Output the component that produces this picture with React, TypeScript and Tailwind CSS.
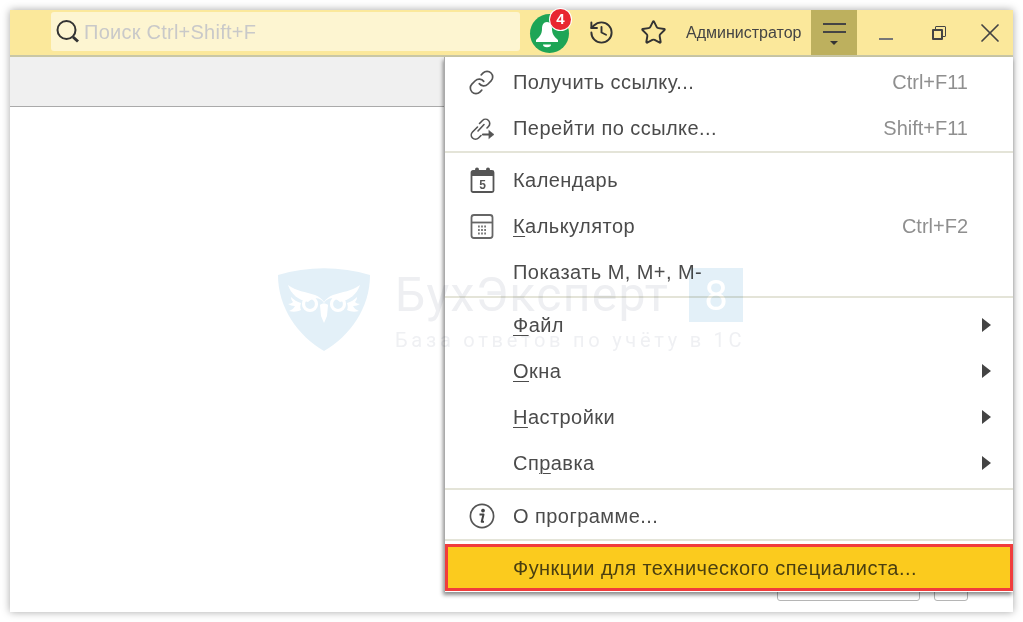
import React from 'react';
import { Link, History, Star, X } from 'lucide-react';

const sans = "font-['Liberation_Sans',Arial,sans-serif]";

const LinkGoIcon = () => (
  <svg width="28" height="28" viewBox="0 0 28 28" fill="none" stroke="#555" strokeWidth="1.6" strokeLinecap="round">
    <path d="M9.500 13l-5 5a4.200 4.200 0 0 0 6 6l2.500-2.500" />
    <path d="M10 17l6-6.500M11.500 9.500l3-3a4.200 4.200 0 0 1 6 6l-1.500 1.500" />
    <path d="M15 20.500h8" strokeWidth="2.200" />
    <path d="M21 16.500l5 4-5 4z" fill="#555" strokeWidth="0.5" />
  </svg>
);

const CalendarIcon = () => (
  <svg width="28" height="28" viewBox="0 0 28 28" fill="none">
    <rect x="3.500" y="5" width="22" height="21" rx="1.500" stroke="#555" strokeWidth="1.800" />
    <rect x="3.500" y="5" width="22" height="5" fill="#555" />
    <circle cx="9" cy="3.500" r="2" fill="#555" />
    <circle cx="20" cy="3.500" r="2" fill="#555" />
    <text x="14.500" y="22.500" textAnchor="middle" fontSize="12" fontWeight="700" fontFamily="Liberation Sans" fill="#555">5</text>
  </svg>
);

const CalculatorIcon = () => (
  <svg width="28" height="28" viewBox="0 0 28 28" fill="none">
    <rect x="3.500" y="3" width="21" height="23" rx="2.500" stroke="#666" strokeWidth="1.800" />
    <path d="M3.500 10.500h21" stroke="#666" strokeWidth="1.800" />
    <path d="M10 14.500h9M10 18h9M10 21.500h9" stroke="#777" strokeWidth="1.800" strokeDasharray="1.800 1.300" />
  </svg>
);

const InfoIcon = () => (
  <svg width="28" height="28" viewBox="0 0 28 28" fill="none">
    <circle cx="14" cy="14" r="11.600" stroke="#555" strokeWidth="1.700" />
    <circle cx="15" cy="8.600" r="1.900" fill="#444" />
    <path d="M11.500 12.500h4l-1.800 7.200h2.300" stroke="#444" strokeWidth="2" strokeLinejoin="round" />
  </svg>
);

const BellBadge = () => (
  <div className="relative w-[39px] h-[39px] rounded-full bg-[#1ea556] flex items-center justify-center">
    <svg width="24" height="28" viewBox="0 0 24 28" fill="white" className="mt-[3px] -ml-[6px]">
      <path d="M12 1c-3.500 0-5 3-5 7 0 5-2.500 8-6 11v2h22v-2c-3.500-3-6-6-6-11 0-4-1.500-7-5-7z" />
      <path d="M8 23.500h8a4 2.800 0 0 1-8 0z" />
    </svg>
    <span className={`absolute -top-[5px] left-[20px] w-[21px] h-[21px] rounded-full bg-[#e8272f] ring-1 ring-white text-white text-[15px] font-bold flex items-center justify-center ${sans}`}>4</span>
  </div>
);

const Owl = () => (
  <svg width="92" height="84" viewBox="0 0 92 84">
    <path d="M0 7C30 -2 62 -2 92 7 C92 40 72 68 46 83 C20 68 0 40 0 7z" fill="#e3f0f8" />
    <g fill="#ffffff">
      <path d="M10 17c8 6 18 7 27 10 4 1.500 7 4 9 7 2-3 5-5.500 9-7 9-3 19-4 27-10-3 9-10 15-20 17-6-5-12-5-16 1-4-6-10-6-16-1C20 32 13 26 10 17z" />
      <path d="M13 29c3 3 6 5 10 6-1 3-1 5 0 7-4 2-8 2-12 1 3-1 5-3 6-5-3 0-5-1-7-2 2 0 4-1 5-2-1-1-2-3-2-5z" />
      <path d="M79 29c-3 3-6 5-10 6 1 3 1 5 0 7 4 2 8 2 12 1-3-1-5-3-6-5 3 0 5-1 7-2-2 0-4-1-5-2 1-1 2-3 2-5z" />
      <path d="M42 37c2-2 6-2 8 0l-1 11-3 7-3-7z" />
    </g>
    <g fill="none" stroke="#ffffff" strokeWidth="3.200">
      <circle cx="32" cy="36" r="6.500" />
      <circle cx="60" cy="36" r="6.500" />
    </g>
  </svg>
);

const Watermark = () => (
  <div className="absolute left-[268px] top-[258px] z-10 flex gap-[25px] mix-blend-multiply pointer-events-none">
    <Owl />
    <div className="flex flex-col">
      <div className="flex items-center h-[54px]">
        <span className="font-['Roboto',sans-serif] text-[48px] leading-none text-[#eeeff2] w-[294px] tracking-[1.300px] whitespace-nowrap">БухЭксперт</span>
        <span className="w-[54px] h-[54px] bg-[#e3f0f8] text-white font-['Roboto',sans-serif] text-[42px] flex items-center justify-center">8</span>
      </div>
      <span className="font-['Roboto',sans-serif] text-[20px] leading-none mt-[8px] text-[#eff0f3] tracking-[3.750px] whitespace-nowrap">База ответов по учёту в 1С</span>
    </div>
  </div>
);

interface RowProps {
  icon?: React.ReactNode;
  label: React.ReactNode;
  shortcut?: string;
  arrow?: boolean;
}

const Row: React.FC<RowProps> = ({ icon, label, shortcut, arrow }) => (
  <div className="h-[46px] flex items-center pr-[22px]">
    <span className="w-[68px] pl-[23px] flex items-center shrink-0">{icon}</span>
    <span className="text-[#4b4b4b] flex-1 whitespace-nowrap tracking-[0.45px]">{label}</span>
    {shortcut && <span className="text-[#8f8f8f] pr-[23px]">{shortcut}</span>}
    {arrow && <span className="w-0 h-0 border-y-[7px] border-y-transparent border-l-[9px] border-l-[#444]" />}
  </div>
);

const Divider = ({ className }: { className: string }) => <div className={`h-[2px] bg-[#e4e4d8] ${className}`} />;

const U = ({ children }: { children: React.ReactNode }) => (
  <span className="underline decoration-1 underline-offset-[3px]">{children}</span>
);

export default function App() {
  return (
    <div className={`w-[1023px] h-[622px] bg-white p-[10px] overflow-hidden ${sans}`}>
      <div className="relative w-[1003px] h-[602px] bg-white flex flex-col shadow-[0_0_8px_rgba(0,0,0,0.35)]">
        <header className="h-[47px] bg-[#fbe89b] border-b-2 border-[#c9c7a6] flex items-center shrink-0">
          <div className="ml-[41px] w-[469px] h-[39px] mb-[2px] bg-[#fdf5d1] rounded-[3px] flex items-center pl-[4px]">
            <svg width="25" height="25" viewBox="0 0 25 25" fill="none" stroke="#333" strokeWidth="2">
              <circle cx="11.500" cy="11" r="9" />
              <path d="M18 18l5 4.500" strokeWidth="3" />
            </svg>
            <span className="ml-[4px] text-[20px] text-[#c9c9c9] whitespace-nowrap tracking-[0.25px]">Поиск Ctrl+Shift+F</span>
          </div>
          <div className="ml-[10px] mt-[1px]"><BellBadge /></div>
          <History size={27} strokeWidth={1.7} color="#333" className="ml-[19px]" />
          <Star size={27} strokeWidth={1.7} color="#333" className="ml-[25px]" />
          <span className="ml-[19px] text-[16px] text-[#444] whitespace-nowrap">Администратор</span>
          <div className="ml-[10px] w-[46px] h-[45px] bg-[#bdb05e] flex flex-col items-center pt-[13px] shrink-0">
            <div className="w-[23px] h-[2px] bg-[#444]" />
            <div className="w-[23px] h-[2px] bg-[#444] mt-[6px]" />
            <div className="w-0 h-0 mt-[8px] border-x-[4px] border-x-transparent border-t-[4px] border-t-[#333]" />
          </div>
          <div className="ml-[22px] w-[14px] h-[2px] bg-[#777] mt-[12px]" />
          <div className="relative ml-[39px] w-[14px] h-[14px]">
            <div className="absolute right-0 top-0 w-[11px] h-[11px] border border-[#444] rounded-[1px]" />
            <div className="absolute left-0 bottom-0 w-[11px] h-[11px] border-2 border-[#444] bg-[#fbe89b] rounded-[1px]" />
          </div>
          <X size={32} strokeWidth={1.300} color="#444" className="ml-[28px]" />
        </header>
        <div className="h-[50px] bg-[#f0f0f0] border-b border-[#aaa] shrink-0" />
        <div className="flex-1 flex justify-end items-end pr-[45px] pb-[11px] gap-[14px]">
          <div className="w-[143px] h-[12px] border border-[#b5b5b5] rounded-[3px]" />
          <div className="w-[34px] h-[12px] border border-[#b5b5b5] rounded-[3px]" />
        </div>

        <Watermark />

        <div className="absolute left-[434px] top-[47px] w-[569px] h-[535px] bg-white border-l border-[#aaa] pt-[2px] text-[20px] shadow-[-1px_3px_4px_rgba(0,0,0,0.45)]">
          <Row icon={<Link size={27} strokeWidth={1.500} color="#555" />} label="Получить ссылку..." shortcut="Ctrl+F11" />
          <Row icon={<LinkGoIcon />} label="Перейти по ссылке..." shortcut="Shift+F11" />
          <Divider className="mb-[4px]" />
          <Row icon={<CalendarIcon />} label="Календарь" />
          <Row icon={<CalculatorIcon />} label={<><U>К</U>алькулятор</>} shortcut="Ctrl+F2" />
          <Row label="Показать М, М+, М-" />
          <Divider className="mt-[1px] mb-[4px]" />
          <Row label={<><U>Ф</U>айл</>} arrow />
          <Row label={<><U>О</U>кна</>} arrow />
          <Row label={<><U>Н</U>астройки</>} arrow />
          <Row label={<>Сп<U>р</U>авка</>} arrow />
          <Divider className="mt-[2px] mb-[3px]" />
          <Row icon={<InfoIcon />} label="О программе..." />
          <Divider className="mb-[3px]" />
          <div className="h-[47px] bg-[#fbcb1e] border-[3px] border-[#f03c3c] flex items-center pl-[65px] text-[#4a3f10] whitespace-nowrap tracking-[0.45px]">
            Функции для технического специалиста...
          </div>
        </div>
      </div>
    </div>
  );
}
